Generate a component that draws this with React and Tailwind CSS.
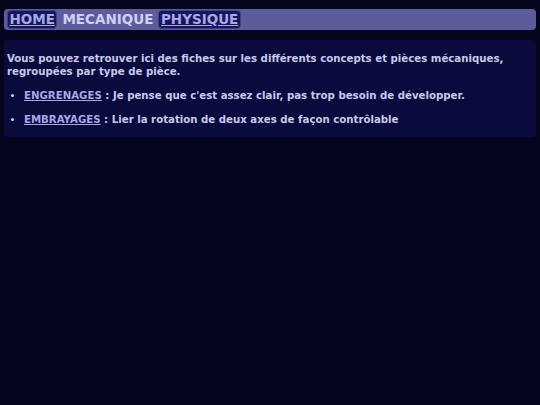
export default function App() {
  const items = [
    { name: "ENGRENAGES", desc: "Je pense que c'est assez clair, pas trop besoin de développer." },
    { name: "EMBRAYAGES", desc: "Lier la rotation de deux axes de façon contrôlable" },
  ];

  return (
    <div className="min-h-[405px] bg-[#05051e] px-[4px] pt-[9px] font-['DejaVu_Sans',sans-serif] font-bold text-[#c8c8ec]">
      <nav className="flex items-center gap-[3px] h-[21px] rounded-[4px] bg-[#5c5c9c] px-[3px] text-[13.5px]">
        <a href="#" className="rounded-[4px] border border-[#40408a] bg-[#16165a] px-[1.5px] leading-[17px] text-[#a8a8e4] underline">
          HOME
        </a>
        <span className="px-[2px] leading-[17px] text-[#d0d0f4]">MECANIQUE</span>
        <a href="#" className="rounded-[4px] border border-[#40408a] bg-[#16165a] px-[1.5px] leading-[17px] text-[#a8a8e4] underline">
          PHYSIQUE
        </a>
      </nav>

      <div className="mt-[10px] rounded-[4px] bg-[#0a0a3c] px-[3px] pt-[12px] pb-[11px] text-[10.2px] leading-[13px]">
        <p>
          Vous pouvez retrouver ici des fiches sur les différents concepts et pièces mécaniques,
          <br />
          regroupées par type de pièce.
        </p>
        <ul className="mt-[11px] flex flex-col gap-[11px] pl-[17px] list-disc">
          {items.map((it) => (
            <li key={it.name}>
              <a href="#" className="text-[#a8a8e4] underline">{it.name}</a> : {it.desc}
            </li>
          ))}
        </ul>
      </div>
    </div>
  );
}
